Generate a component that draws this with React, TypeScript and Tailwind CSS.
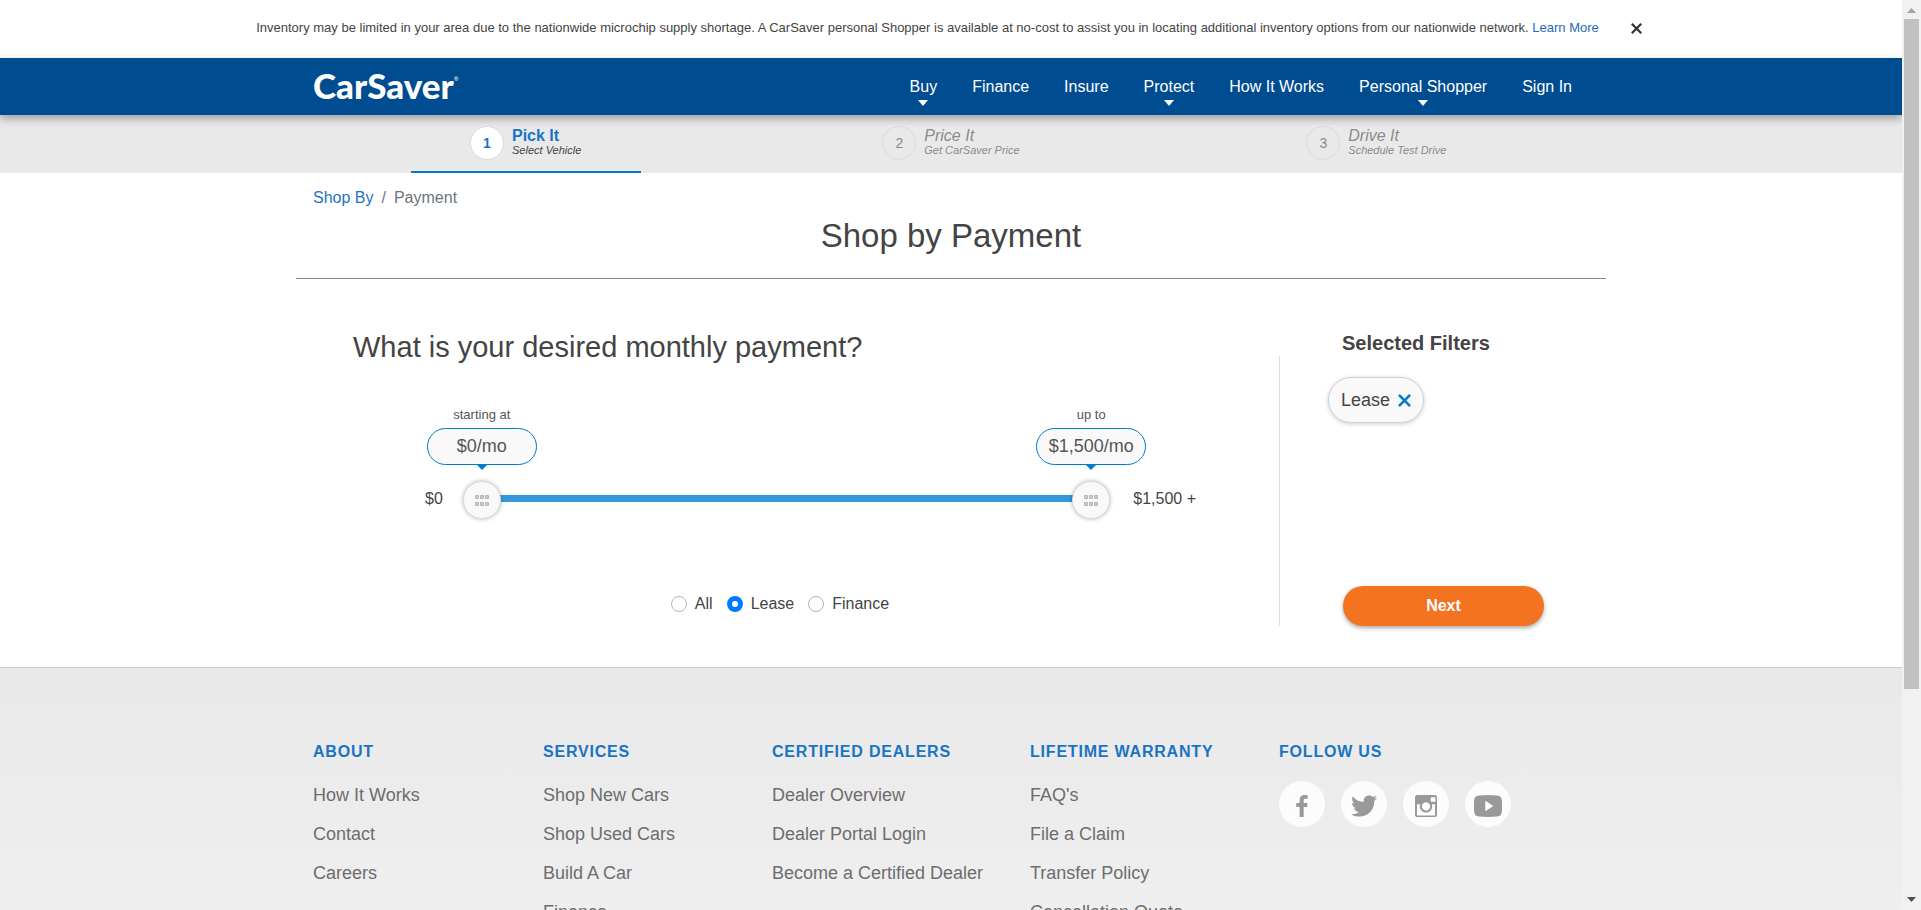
import { useState } from "react";
import { FaTwitter } from "react-icons/fa";

const MAX_PAYMENT = 1500;

const navItems = [
  { label: "Buy", menu: true },
  { label: "Finance", menu: false },
  { label: "Insure", menu: false },
  { label: "Protect", menu: true },
  { label: "How It Works", menu: false },
  { label: "Personal Shopper", menu: true },
  { label: "Sign In", menu: false },
];

const steps = [
  { title: "Pick It", detail: "Select Vehicle", active: true },
  { title: "Price It", detail: "Get CarSaver Price", active: false },
  { title: "Drive It", detail: "Schedule Test Drive", active: false },
];

const footerColumns = [
  { title: "About", links: ["How It Works", "Contact", "Careers"] },
  { title: "Services", links: ["Shop New Cars", "Shop Used Cars", "Build A Car", "Finance"] },
  { title: "Certified Dealers", links: ["Dealer Overview", "Dealer Portal Login", "Become a Certified Dealer"] },
  { title: "Lifetime Warranty", links: ["FAQ's", "File a Claim", "Transfer Policy", "Cancellation Quote"] },
];

function Cross({ className }: { className: string }) {
  return (
    <svg viewBox="0 0 14 14" className={className} fill="none" stroke="currentColor" strokeWidth="2.800" aria-hidden="true">
      <path d="M1 1 13 13M13 1 1 13" />
    </svg>
  );
}

function FacebookIcon() {
  return (
    <svg viewBox="90 0 880 1664" className="h-[22px] w-3" aria-hidden="true">
      <path
        fill="currentColor"
        d="M959 12v264h-157q-86 0-116 36t-30 108v189h293l-39 296h-254v759h-306v-759h-255v-296h255v-218q0-186 104-288.500t277-102.500q147 0 228 12z"
      />
    </svg>
  );
}

function InstagramIcon() {
  return (
    <svg viewBox="0 0 22 22" className="size-[22px]" aria-hidden="true">
      <path
        fill="currentColor"
        fillRule="evenodd"
        d="M2 0h18a2 2 0 0 1 2 2v18a2 2 0 0 1-2 2H2a2 2 0 0 1-2-2V2a2 2 0 0 1 2-2ZM15.800 2.200v4.600h4.600v-4.600ZM2 9.200V20.400h18V9.200h-3.200a6.200 6.200 0 1 1-11.600 0ZM11 7.200a4.200 4.200 0 1 0 0 8.400 4.200 4.200 0 0 0 0-8.400Z"
      />
    </svg>
  );
}

function YoutubeIcon() {
  return (
    <svg viewBox="0 0 28 22" className="h-[22px] w-7" aria-hidden="true">
      <path
        fill="currentColor"
        fillRule="evenodd"
        d="M5 .5Q14-.3 23 .5q4.500.3 4.800 4.500.4 6 0 12-.3 4.200-4.800 4.500-9 .8-18 0Q.5 21.200.2 17q-.4-6 0-12Q.5.8 5 .5ZM11.300 5.800v10.400l8-5.200Z"
      />
    </svg>
  );
}

function Handle({ caption, value, onChange }: { caption: string; value: number; onChange: (v: number) => void }) {
  const amount = `$${value.toLocaleString("en-US")}/mo`;
  return (
    <div
      className="absolute top-0 flex w-[110px] -translate-x-1/2 flex-col items-center"
      style={{ left: `${(value / MAX_PAYMENT) * 100}%` }}
    >
      <span className="text-[13px] leading-5 text-[#555]">{caption}</span>
      <span className="relative mt-[3px] flex h-[37px] w-full items-center justify-center rounded-full border border-[#007dc6] bg-[#f9f9f9] text-[18px] text-[#555]">
        {amount}
        <svg viewBox="0 0 12 6" className="absolute top-full h-[6px] w-3" aria-hidden="true">
          <path d="M0 0h12L6 6Z" fill="#007dc6" />
        </svg>
      </span>
      <span className="relative mt-4 flex size-[38px] items-center justify-center rounded-full border border-[#ddd] bg-[#f9f9f9] shadow-[0_0_4px_rgba(0,0,0,0.3)]">
        <svg viewBox="0 0 14 11" className="h-[11px] w-[14px]" fill="#ccc" stroke="#b5b5b5" aria-hidden="true">
          <path d="M.5.5h3v3h-3ZM5.500.5h3v3h-3ZM10.500.5h3v3h-3ZM.5 7.500h3v3h-3ZM5.500 7.500h3v3h-3ZM10.500 7.500h3v3h-3Z" />
        </svg>
        <input
          type="range"
          aria-label={`Payment ${caption}`}
          min={0}
          max={MAX_PAYMENT}
          step={50}
          value={value}
          onChange={(e) => onChange(Number(e.target.value))}
          className="absolute inset-0 size-full cursor-pointer opacity-0"
        />
      </span>
    </div>
  );
}

export default function App() {
  const [low, setLow] = useState(0);
  const [high, setHigh] = useState(MAX_PAYMENT);
  const [plan, setPlan] = useState("Lease");

  return (
    <div className="flex h-screen overflow-hidden bg-white font-['Liberation_Sans',Arial,sans-serif] text-base text-[#444]">
      <div className="flex min-w-0 flex-1 flex-col overflow-hidden">
        <div className="flex h-[58px] shrink-0 items-center justify-center gap-7 px-4 pb-[2px] text-[13px]">
          <p>
            Inventory may be limited in your area due to the nationwide microchip supply shortage. A CarSaver personal
            Shopper is available at no-cost to assist you in locating additional inventory options from our nationwide
            network.{" "}
            <a href="#learn" className="text-[#1f69c0]">
              Learn More
            </a>
          </p>
          <button type="button" aria-label="Close notice" className="px-1 text-[#333]">
            <Cross className="size-[11px]" />
          </button>
        </div>

        <header className="relative z-10 shrink-0 bg-[#004c91] shadow-[0_4px_8px_rgba(0,0,0,0.3)]">
          <div className="mx-auto flex h-[57px] max-w-[1310px] items-center justify-between px-[17px]">
            <a href="#home" className="flex items-center pb-[3px] font-['Lato',sans-serif] text-[35px] leading-none font-black text-white">
              CarSaver
              <span className="self-start pt-2 text-[6px] font-normal">®</span>
            </a>
            <nav className="flex gap-[35px] pr-[17px] text-white">
              {navItems.map((item) => (
                <a key={item.label} href="#nav" className="relative leading-6">
                  {item.label}
                  {item.menu && (
                    <svg viewBox="0 0 10 6" className="absolute top-full left-1/2 mt-px h-[6px] w-[10px] -translate-x-1/2" aria-hidden="true">
                      <path d="M0 0h10L5 6Z" fill="currentColor" />
                    </svg>
                  )}
                </a>
              ))}
            </nav>
          </div>
        </header>

        <div className="shrink-0 bg-[#e9e9e9]">
          <ol className="mx-auto grid max-w-[1310px] grid-cols-3 px-[17px]">
            {steps.map((step, i) => (
              <li
                key={step.title}
                className={`mx-auto flex h-[58px] w-[230px] items-center justify-center gap-2 border-b-2 ${
                  step.active ? "border-[#007dc6]" : "border-transparent text-[#8b8b8b]"
                }`}
              >
                <span
                  className={`flex size-[34px] items-center justify-center rounded-full border border-[#dcdcdc] text-sm ${
                    step.active ? "bg-white font-bold text-[#1a74c4]" : ""
                  }`}
                >
                  {i + 1}
                </span>
                <span className="flex flex-col pb-[2px]">
                  <span className={`leading-4 ${step.active ? "font-bold text-[#1a74c4]" : "italic"}`}>{step.title}</span>
                  <span className="text-[11px] leading-3 italic">{step.detail}</span>
                </span>
              </li>
            ))}
          </ol>
        </div>

        <main className="mx-auto w-full max-w-[1310px] shrink-0">
          <nav aria-label="Breadcrumb" className="flex gap-2 px-[17px] pt-[13px] leading-6 text-[#6c757d]">
            <a href="#shop" className="text-[#1a74c4]">
              Shop By
            </a>
            <span>/</span>
            <span>Payment</span>
          </nav>
          <h1 className="mt-[6px] text-center text-[33px] leading-10">Shop by Payment</h1>
          <div role="separator" className="mt-[22px] h-px bg-[#888]" />

          <div className="mt-12 mb-[41px] flex px-[17px]">
            <section className="min-w-0 flex-1 pb-[10px]">
              <h2 className="pl-10 text-[29px] leading-10">What is your desired monthly payment?</h2>
              <div className="mt-[38px] flex items-end gap-5 pr-[83px] pl-28">
                <span className="leading-10">$0</span>
                <div className="h-[114px] flex-1 px-[19px]">
                  <div className="relative h-full">
                    <div className="absolute inset-x-0 bottom-[17px] h-[7px] bg-[#ddd]" />
                    <div
                      className="absolute bottom-[17px] h-[7px] bg-[#3498db]"
                      style={{ left: `${(low / MAX_PAYMENT) * 100}%`, right: `${100 - (high / MAX_PAYMENT) * 100}%` }}
                    />
                    <Handle caption="starting at" value={low} onChange={(v) => setLow(Math.min(v, high))} />
                    <Handle caption="up to" value={high} onChange={(v) => setHigh(Math.max(v, low))} />
                  </div>
                </div>
                <span className="pl-[3px] leading-10">$1,500 +</span>
              </div>
              <div className="mt-[73px] flex justify-center gap-[14px] pr-8">
                {["All", "Lease", "Finance"].map((name) => (
                  <label key={name} className="flex items-center gap-2 leading-6">
                    <input
                      type="radio"
                      name="plan"
                      checked={plan === name}
                      onChange={() => setPlan(name)}
                      className="size-4 appearance-none rounded-full border border-[#adb5bd] bg-white checked:border-[5px] checked:border-[#007bff]"
                    />
                    {name}
                  </label>
                ))}
              </div>
            </section>
            <div className="mt-[29px] w-px bg-[#ddd]" />
            <aside className="flex w-[309px] flex-col items-start pl-12">
              <h3 className="pl-[14px] text-[20px] leading-8 font-bold">Selected Filters</h3>
              <button
                type="button"
                className="mt-[18px] flex h-[46px] items-center gap-2 rounded-full border border-[#d0d0d0] bg-[#f9f9f9] px-3 text-[18px] shadow-[0_1px_4px_rgba(0,0,0,0.2)]"
              >
                {plan}
                <Cross className="size-[13px] text-[#007dc6]" />
              </button>
              <button
                type="button"
                className="mt-auto ml-[15px] h-10 w-[201px] rounded-full bg-[#f47321] font-bold text-white shadow-[0_2px_4px_rgba(0,0,0,0.35)]"
              >
                Next
              </button>
            </aside>
          </div>
        </main>

        <footer className="min-h-[420px] shrink-0 border-t border-[#ccc] bg-linear-to-b from-[#e9e9e9] to-[#f3f3f3]">
          <div className="mx-auto grid max-w-[1310px] grid-cols-[230px_229px_258px_249px_1fr] px-[17px] pt-[72px]">
            {footerColumns.map((col) => (
              <div key={col.title}>
                <h4 className="leading-6 font-bold tracking-wider text-[#1a74c4] uppercase">{col.title}</h4>
                <ul className="mt-3 text-[18px] leading-[39px] text-[#6d6d6d]">
                  {col.links.map((link) => (
                    <li key={link}>
                      <a href="#footer">{link}</a>
                    </li>
                  ))}
                </ul>
              </div>
            ))}
            <div>
              <h4 className="leading-6 font-bold tracking-wider text-[#1a74c4] uppercase">Follow Us</h4>
              <div className="mt-[17px] flex gap-4 text-[#999]">
                <a href="#facebook" aria-label="Facebook" className="flex size-[46px] items-center justify-center rounded-full bg-[#fcfcfc] pt-1">
                  <FacebookIcon />
                </a>
                <a href="#twitter" aria-label="Twitter" className="flex size-[46px] items-center justify-center rounded-full bg-[#fcfcfc] pt-1">
                  <FaTwitter className="size-[26px]" />
                </a>
                <a href="#instagram" aria-label="Instagram" className="flex size-[46px] items-center justify-center rounded-full bg-[#fcfcfc] pt-1">
                  <InstagramIcon />
                </a>
                <a href="#youtube" aria-label="YouTube" className="flex size-[46px] items-center justify-center rounded-full bg-[#fcfcfc] pt-1">
                  <YoutubeIcon />
                </a>
              </div>
            </div>
          </div>
        </footer>
      </div>

      <div className="flex w-[19px] shrink-0 flex-col items-center bg-[#f1f1f1]" aria-hidden="true">
        <svg viewBox="0 0 17 19" className="h-[19px] w-[17px] shrink-0" fill="#a3a3a3">
          <path d="M4 13h9L8.500 8Z" />
        </svg>
        <div className="min-h-0 w-[15px] flex-[670] bg-[#c1c1c1]" />
        <div className="flex-[202]" />
        <svg viewBox="0 0 17 19" className="h-[19px] w-[17px] shrink-0" fill="#505050">
          <path d="M4 6h9L8.500 11Z" />
        </svg>
      </div>
    </div>
  );
}
